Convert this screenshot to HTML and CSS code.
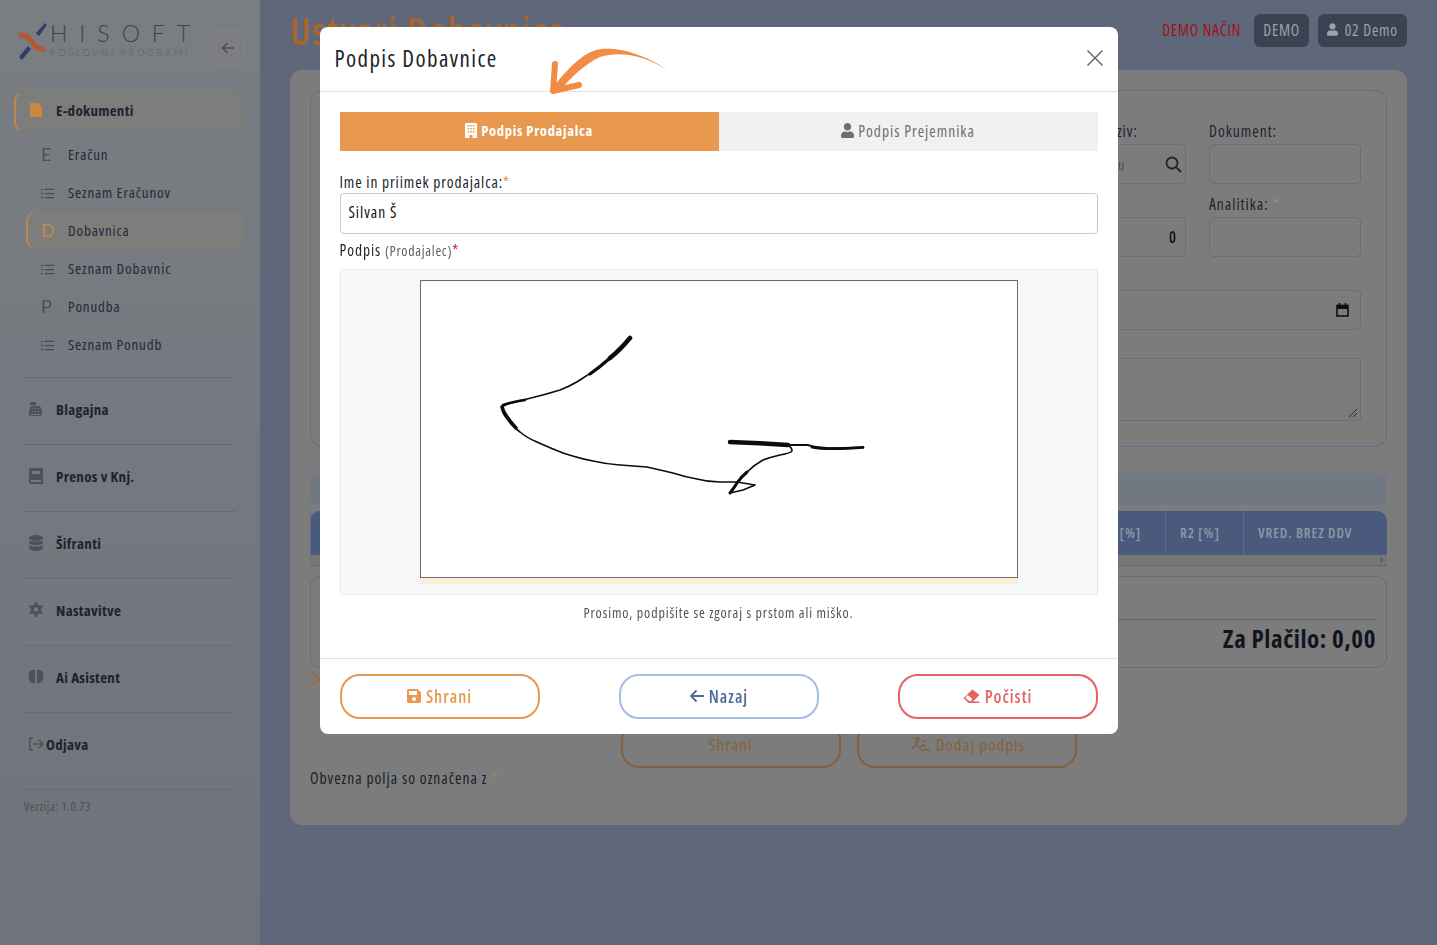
FILE: index.html
```html
<!DOCTYPE html>
<html lang="sl">
  <head>
    <meta charset="UTF-8" />
    <meta name="viewport" content="width=device-width, initial-scale=1.0" />
    <title>Ustvari Dobavnico</title>
    <link rel="stylesheet" href="styles.css">
  </head>
  <body>
    <svg class="sprite" width="0" height="0">
      <symbol id="i-user" viewBox="0 0 448 512"><path d="M224 256c70.7 0 128-57.3 128-128S294.7 0 224 0 96 57.3 96 128s57.3 128 128 128zm89.6 32h-16.7c-22.2 10.2-46.9 16-72.9 16s-50.6-5.8-72.9-16h-16.7C60.2 288 0 348.2 0 422.4V464c0 26.5 21.5 48 48 48h352c26.5 0 48-21.5 48-48v-41.6c0-74.2-60.2-134.4-134.4-134.4z"/></symbol>
      <symbol id="i-save" viewBox="0 0 448 512"><path d="M433.941 129.941l-83.882-83.882A48 48 0 0 0 316.118 32H48C21.49 32 0 53.49 0 80v352c0 26.51 21.49 48 48 48h352c26.51 0 48-21.49 48-48V163.882a48 48 0 0 0-14.059-33.941zM224 416c-35.346 0-64-28.654-64-64 0-35.346 28.654-64 64-64s64 28.654 64 64c0 35.346-28.654 64-64 64zm96-304.52V212c0 6.627-5.373 12-12 12H76c-6.627 0-12-5.373-12-12V108c0-6.627 5.373-12 12-12h228.52c3.183 0 6.235 1.264 8.485 3.515l3.48 3.48A11.996 11.996 0 0 1 320 111.48z"/></symbol>
      <symbol id="i-list" viewBox="0 0 16 16"><path d="M5 3h10v1.3H5zM5 7.4h10v1.3H5zM5 11.8h10v1.3H5zM1 2.8h2v1.7H1zM1 7.2h2v1.7H1zM1 11.6h2v1.7H1z"/></symbol>
    </svg>

    <div class="stran">
      <aside class="stranski">
        <div class="logo-vrsta">
          <div class="logo">
            <svg width="30" height="40" viewBox="0 0 30 40">
              <path d="M18 11 L27 1 L29 3 L21 14 Z" fill="#2f3f6c"/>
              <path d="M1 35 L10 24 L13 27 L4 38 Z" fill="#2f3f6c"/>
              <path d="M1 14 C9 11 11 17 15 21 C18 25 22 28 27 27" fill="none" stroke="#b5582d" stroke-width="5"/>
            </svg>
            <div class="logo-tekst">
              <span class="logo-ime">HISOFT</span>
              <span class="logo-pod">POSLOVNI PROGRAMI</span>
            </div>
          </div>
          <button class="skrci">
            <svg width="14" height="14" viewBox="0 0 14 14" fill="none" stroke="#4a505c" stroke-width="1.6"><path d="M13 7H1.5M6.5 2 1.5 7l5 5"/></svg>
          </button>
        </div>

        <a class="glavni aktiven prvi">
          <svg class="ikona" width="14" height="16" viewBox="0 0 14 16"><path d="M1 1h8l4 4v10H1z" fill="#c8893f"/></svg>
          E-dokumenti
        </a>
        <a class="pod"><span class="crka">E</span>Eračun</a>
        <a class="pod"><svg class="seznam" width="15" height="15"><use href="#i-list"/></svg>Seznam Eračunov</a>
        <a class="pod aktiven"><span class="crka oranzna">D</span>Dobavnica</a>
        <a class="pod"><svg class="seznam" width="15" height="15"><use href="#i-list"/></svg>Seznam Dobavnic</a>
        <a class="pod"><span class="crka">P</span>Ponudba</a>
        <a class="pod"><svg class="seznam" width="15" height="15"><use href="#i-list"/></svg>Seznam Ponudb</a>
        <div class="skupina-konec"></div>

        <a class="glavni">
          <svg class="ikona" width="16" height="16" viewBox="0 0 16 16" fill="#4c515b"><path d="M2 1h6v3H6v1h6l2 5v5H1v-5l2-5h2V4H2zM4 7v1h1V7zm3 0v1h1V7zm3 0v1h1V7zM4 10v1h1v-1zm3 0v1h1v-1zm3 0v1h1v-1zM2 13v1h12v-1z" fill-rule="evenodd"/></svg>
          Blagajna
        </a>
        <a class="glavni">
          <svg class="ikona" width="14" height="16" viewBox="0 0 14 16" fill="#4c515b"><path d="M2 0h12v16H2a2 2 0 0 1-2-2V2a2 2 0 0 1 2-2zm1 3v3h8V3zm-1 9v2h10v-2z" fill-rule="evenodd"/></svg>
          Prenos v Knj.
        </a>
        <a class="glavni">
          <svg class="ikona" width="14" height="16" viewBox="0 0 14 16" fill="#4c515b"><ellipse cx="7" cy="3" rx="7" ry="3"/><path d="M0 5c1 2 13 2 14 0v3c-1 3-13 3-14 0zM0 10c1 2 13 2 14 0v3c-1 4-13 4-14 0z"/></svg>
          Šifranti
        </a>
        <a class="glavni">
          <svg class="ikona" width="15" height="15" viewBox="0 0 16 16"><circle cx="8" cy="8" r="4.2" fill="none" stroke="#4c515b" stroke-width="3.2"/><path d="M8 0v16M1 4l14 8M15 4 1 12" stroke="#4c515b" stroke-width="2.6"/><circle cx="8" cy="8" r="2.3" fill="#77797e"/></svg>
          Nastavitve
        </a>
        <a class="glavni">
          <svg class="ikona" width="15" height="15" viewBox="0 0 16 16" fill="#4c515b"><path d="M7 1v14C3 16 0 13 0 8s3-8 7-7zM9 1c4-1 7 2 7 7s-3 8-7 7z"/></svg>
          Ai Asistent
        </a>
        <a class="glavni odjava">
          <svg width="16" height="14" viewBox="0 0 16 14" fill="none" stroke="#4c515b" stroke-width="1.5"><path d="M5 1H2v12h3M5 7h10M11 3l4 4-4 4"/></svg>
          Odjava
        </a>
        <div class="verzija">Verzija: 1.0.73</div>
      </aside>

      <main class="vsebina">
        <header class="glava">
          <h1>Ustvari Dobavnico</h1>
          <div class="glava-desno">
            <span class="demo-nacin">DEMO NAČIN</span>
            <button class="temen">DEMO</button>
            <button class="temen"><svg width="11" height="13"><use href="#i-user"/></svg> 02 Demo</button>
          </div>
        </header>

        <section class="kartica">
          <fieldset class="okvir">
            <div class="polje"></div>
            <div class="polje">
              <label>Dobavitelj naziv:</label>
              <div class="vnos iskanje"><span>Išči po nazivu</span>
                <svg width="17" height="17" viewBox="0 0 17 17" fill="none" stroke="#1f2530" stroke-width="1.8"><circle cx="7" cy="7" r="5.5"/><path d="m11 11 5 5"/></svg>
              </div>
            </div>
            <div class="polje">
              <label>Dokument:</label>
              <div class="vnos"></div>
            </div>
            <div class="polje"></div>
            <div class="polje">
              <label>&nbsp;</label>
              <div class="vnos stevilka">0</div>
            </div>
            <div class="polje">
              <label>Analitika: <i>*</i></label>
              <div class="vnos"></div>
            </div>
            <div class="polje siroko datum">
              <label>&nbsp;</label>
              <div class="vnos">
                <svg width="13" height="14" viewBox="0 0 13 14" fill="none" stroke="#0d0f14" stroke-width="1.6"><rect x="1" y="2.5" width="11" height="10.5"/><path d="M1 4.5h11" stroke-width="3"/><path d="M3.5 0v2M9.5 0v2"/></svg>
              </div>
            </div>
            <div class="polje siroko">
              <label>&nbsp;</label>
              <div class="opomba">
                <svg width="10" height="10" viewBox="0 0 10 10" stroke="#2b2b2b"><path d="M9 1 1 9M9 5 5 9"/></svg>
              </div>
            </div>
          </fieldset>

          <div class="trak"></div>

          <div class="tabela">
            <div class="tabela-glava">
              <span class="stolpec siri">R1 [%]</span>
              <span class="stolpec r2">R2 [%]</span>
              <span class="stolpec vred">VRED. BREZ DDV</span>
            </div>
            <div class="drsnik"><i></i></div>
          </div>

          <div class="povzetek">
            <div class="za-placilo">Za Plačilo: 0,00</div>
          </div>

          <svg class="puscica-desno" width="10" height="15" viewBox="0 0 10 15" fill="none" stroke="#a8652f" stroke-width="1.6"><path d="m1 1 7 6.5L1 14"/></svg>

          <div class="gumbi-spodaj">
            <button>Shrani</button>
            <button>
              <svg width="23" height="14" viewBox="0 0 21 13" fill="none" stroke="currentColor" stroke-width="1.5"><path d="M1 12h1M4 11c3-3 5-7 6-9 1-2-3-2-3 1 0 3 3 7 4 7 1 0 2-3 3-3s1 2 2 2M13 4h3M12 12h8"/></svg>
              Dodaj podpis
            </button>
          </div>
          <p class="obvezna">Obvezna polja so označena z <i>*</i></p>
        </section>
      </main>
    </div>

    <div class="ozadje">
      <div class="modal">
        <div class="modal-glava">
          <h2>Podpis Dobavnice</h2>
          <svg class="lok" width="120" height="50" viewBox="550 48 120 50">
            <path d="M669 71C640 51 612 46 596 50 580 55 567 70 553 87L560 91C572 76 585 64 600 57 620 51 642 54 669 71Z" fill="#f28c45"/>
            <path d="M555 64 553 91 579 85" fill="none" stroke="#f28c45" stroke-width="6" stroke-linecap="round" stroke-linejoin="round"/>
          </svg>
          <button class="zapri">
            <svg width="18" height="18" viewBox="0 0 18 18" stroke="#5f5f5f" stroke-width="1.4"><path d="m1.5 1.5 15 15M16.500 1.500l-15 15"/></svg>
          </button>
        </div>

        <div class="modal-telo">
          <div class="zavihki">
            <button class="zavihek izbran">
              <svg width="12" height="15" viewBox="0 0 12 15" fill="currentColor"><path fill-rule="evenodd" d="M1 0h10a1 1 0 0 1 1 1v14H7.500v-3h-3v3H0V1a1 1 0 0 1 1-1zm1.500 2v1.600h1.600V2zm2.700 0v1.600h1.600V2zm2.700 0v1.600h1.600V2zM2.500 5v1.600h1.600V5zm2.700 0v1.600h1.600V5zm2.700 0v1.600h1.600V5zM2.500 8v1.600h1.600V8zm2.700 0v1.600h1.600V8zm2.700 0v1.600h1.600V8z"/></svg>
              Podpis Prodajalca
            </button>
            <button class="zavihek">
              <svg width="13" height="15"><use href="#i-user"/></svg>
              Podpis Prejemnika
            </button>
          </div>

          <label class="oznaka">Ime in priimek prodajalca:<i>*</i></label>
          <input class="ime" type="text" value="Silvan Š" />

          <label class="oznaka podpis-oznaka">Podpis <small>(Prodajalec)</small><b>*</b></label>
          <div class="podpis-polje">
            <div class="platno">
              <svg width="596" height="296" viewBox="1 1 596 296" fill="none" stroke="#0c0c0c" stroke-linecap="round" stroke-linejoin="round">
                <path stroke-width="1.600" d="M210 58Q193 77 183 84 173 92 163 98 153 105 140 110 127 114 115 117 103 120 93 122.500 83 125 82 128 82 133 88 140 92 146 100 152 107 158 117 162 130 168 143 173 158 178 173 181 186 184 200 185 213 186 227 187 240 190 253 193 265 197 277 199 288 202 300 202L317 202 335 205 323 210 310 213Q314 208 317 203 321 197 327 192 334 185 343 180 351 177 360 175 371 173 372 171 372 167 368 166 356 164 343 163L310 162"/>
                <path stroke-width="1.800" d="M368 165H387Q392 166 400 168.700L443 167.300"/>
                <path stroke-width="4.500" d="M210 58Q200 70 190 78"/>
                <path stroke-width="3.200" d="M190 78Q180 87 170 94"/>
                <path stroke-width="3.500" d="M82 127Q84 135 96 148"/>
                <path stroke-width="2.500" d="M83 125Q92 122 105 120"/>
                <path stroke-width="4.500" d="M310 162Q340 163 368 165"/>
                <path stroke-width="2.800" d="M392 167Q410 170 443 167.300"/>
                <path stroke-width="3" d="M310 213Q314 208 317 203 321 197 327 192"/>
              </svg>
            </div>
            <div class="platno-rob"></div>
          </div>
          <p class="navodilo">Prosimo, podpišite se zgoraj s prstom ali miško.</p>
        </div>

        <div class="modal-noga">
          <button class="gumb oranzen"><svg width="14" height="16"><use href="#i-save"/></svg> Shrani</button>
          <button class="gumb moder">
            <svg width="15" height="14" viewBox="0 0 15 14" fill="none" stroke="currentColor" stroke-width="1.800"><path d="M15 7H2M7.500 1.500 2 7l5.500 5.500"/></svg>
            Nazaj
          </button>
          <button class="gumb rdec">
            <svg width="17" height="14" viewBox="0 0 17 14" fill="currentColor"><path d="M9.500.500 16.500 6 10 12.500H16.500V14H5.500L.500 9zM7 12.500 9.500 10 4.500 6 2.500 9z" fill-rule="evenodd"/></svg>
            Počisti
          </button>
        </div>
      </div>
    </div>
  </body>
</html>
```

FILE: styles.css
```css
* {
  box-sizing: border-box;
}
body {
  margin: 0;
  height: 945px;
  overflow: hidden;
  font-family: "Open Sans", "Noto Sans", sans-serif;
  font-stretch: 75%;
  font-size: 15.500px;
  font-weight: 500;
  letter-spacing: 1px;
  color: #1c2330;
  background-color: #5f687b;
}
button {
  font: inherit;
  font-stretch: inherit;
  letter-spacing: inherit;
  cursor: pointer;
}
.sprite {
  display: none;
}
.stran {
  display: flex;
  height: 945px;
}

/* stranski meni */
.stranski {
  width: 260px;
  flex-shrink: 0;
  padding: 0 15px 0 14px;
  background: linear-gradient(#7a7d82, #70737a);
}
.logo-vrsta {
  display: flex;
  justify-content: space-between;
  align-items: flex-start;
  height: 91px;
}
.logo {
  display: flex;
  gap: 2px;
  margin: 22px 0 0 4px;
}
.logo-tekst {
  display: flex;
  flex-direction: column;
  margin-top: -1px;
}
.logo-ime {
  font-family: Lato, sans-serif;
  font-stretch: normal;
  font-weight: 300;
  font-size: 23px;
  line-height: 24px;
  letter-spacing: 12px;
  color: #3d4450;
}
.logo-pod {
  margin-top: 1px;
  font-family: Lato, sans-serif;
  font-stretch: normal;
  font-weight: 300;
  font-size: 9.500px;
  line-height: 14px;
  letter-spacing: 2.500px;
  color: #5a5f68;
}
.skrci {
  width: 35px;
  height: 35px;
  margin-top: 30px;
  display: flex;
  align-items: center;
  justify-content: center;
  padding: 0;
  background: #7c7e80;
  border: 1px solid #808285;
  border-radius: 6px;
}
.glavni {
  display: flex;
  align-items: center;
  height: 67px;
  margin: 0 9px 0 10px;
  padding: 0 0 5px 4px;
  font-size: 15px;
  font-weight: 700;
  letter-spacing: 0.300px;
  border-bottom: 1px solid #686b72;
}
.glavni .ikona {
  width: 28px;
  flex-shrink: 0;
  padding-right: 12px;
}
.glavni.prvi {
  height: 41px;
  margin: 0 0 3px;
  padding: 0 0 3px 12px;
  width: 231px;
  background: #7d7d7b;
  border: 1px solid #7a7a78;
  border-left: 2px solid #b98a50;
  border-radius: 10px;
}
.pod {
  display: flex;
  align-items: center;
  height: 38px;
  margin-left: 12px;
  padding: 0 0 0 12px;
  width: 219px;
  font-size: 15px;
  letter-spacing: 0.850px;
  color: #232a38;
}
.pod.aktiven {
  background: #7d7d7b;
  border-left: 2px solid #b98a50;
  border-radius: 10px;
  padding-left: 10px;
}
.crka {
  width: 30px;
  font-family: Lato, sans-serif;
  font-stretch: normal;
  font-size: 18px;
  font-weight: 400;
  color: #4c515b;
  padding-left: 3px;
}
.crka.oranzna {
  color: #c18a4f;
}
.seznam {
  margin: 2px 13px 0 2px;
  fill: #474c57;
}
.skupina-konec {
  height: 15px;
  margin: 0 13px 0 10px;
  border-bottom: 1px solid #686b72;
}
.odjava {
  gap: 2px;
  height: 77px;
  padding-bottom: 15px;
}
.verzija {
  margin: 8px 0 0 10px;
  font-size: 12px;
  font-weight: 400;
  letter-spacing: 0.600px;
  color: #4a4e57;
}

/* glavni del */
.vsebina {
  flex: 1;
  padding: 0 30px 0 30px;
}
.glava {
  display: flex;
  justify-content: space-between;
  align-items: center;
  height: 70px;
  padding-bottom: 10px;
}
h1 {
  margin: 0;
  font-size: 38px;
  font-weight: 600;
  letter-spacing: 1.500px;
  color: #a8652f;
}
.glava-desno {
  display: flex;
  align-items: center;
  gap: 9px;
  letter-spacing: 0.800px;
}
.demo-nacin {
  color: #a3101c;
  margin-right: 4px;
}
.temen {
  height: 33px;
  padding: 0 9px;
  color: #9ca1ab;
  background: #3a4351;
  border: 0;
  border-radius: 6px;
  fill: #9ca1ab;
}
.temen svg {
  margin-right: 3px;
}
.kartica {
  height: 755px;
  padding: 20px;
  background: #7c7c7c;
  border-radius: 12px;
}
.okvir {
  display: grid;
  grid-template-columns: 1fr 152px 152px;
  grid-template-rows: 73px 73px 68px auto;
  column-gap: 23px;
  align-content: start;
  height: 357px;
  margin: 0;
  padding: 32px 25px 0;
  border: 1px solid #66688c;
  border-radius: 12px;
}
.polje label {
  display: block;
  height: 21px;
  line-height: 16px;
  white-space: nowrap;
}
.polje i,
.obvezna i {
  font-style: normal;
  color: #a98a62;
}
.siroko {
  grid-column: 1 / -1;
}
.vnos {
  display: flex;
  align-items: center;
  height: 40px;
  padding: 0 10px;
  border: 1px solid #6d6d6f;
  border-radius: 5px;
}
.iskanje {
  justify-content: space-between;
  padding-right: 3px;
  font-size: 14px;
  letter-spacing: 1.200px;
  color: #4c4c4c;
  white-space: nowrap;
}
.stevilka {
  justify-content: flex-end;
  padding-right: 8px;
  font-weight: 600;
  color: #111;
}
.datum .vnos {
  justify-content: flex-end;
  padding-right: 11px;
}
.opomba {
  display: flex;
  align-items: flex-end;
  justify-content: flex-end;
  height: 63px;
  padding: 2px;
  border: 1px solid #6d6d6f;
  border-radius: 2px;
}
.trak {
  height: 32px;
  margin-top: 26px;
  background: #727882;
  border-radius: 8px;
}
.tabela {
  margin-top: 6px;
}
.tabela-glava {
  display: flex;
  height: 44px;
  background: #4a5a7c;
  border-radius: 10px 10px 0 0;
  color: #8d99a8;
  font-size: 14px;
  font-weight: 600;
  letter-spacing: 0.900px;
  line-height: 44px;
}
.stolpec {
  padding: 0 14px;
  border-left: 1px solid #5d6c89;
  white-space: nowrap;
}
.siri {
  flex: 1;
  text-align: right;
  padding-right: 24px;
}
.r2 {
  width: 78px;
}
.vred {
  width: 144px;
}
.drsnik {
  display: flex;
  justify-content: flex-end;
  align-items: center;
  height: 11px;
  padding-right: 3px;
  background: #767676;
  border-bottom: 1px solid #676767;
}
.drsnik i {
  border-left: 4px solid #636363;
  border-top: 3px solid transparent;
  border-bottom: 3px solid transparent;
}
.povzetek {
  display: flex;
  align-items: flex-end;
  justify-content: flex-end;
  height: 92px;
  margin-top: 10px;
  padding: 0 10px 12px;
  border: 1px solid #6b6b6b;
  border-radius: 10px;
}
.za-placilo {
  width: 400px;
  padding-top: 1px;
  border-top: 1px solid #626262;
  font-size: 25px;
  font-weight: 700;
  letter-spacing: 0.600px;
  text-align: right;
  color: #10151f;
}
.puscica-desno {
  display: block;
  margin: 4px 0 0 1px;
}
.gumbi-spodaj {
  display: flex;
  justify-content: center;
  gap: 16px;
  margin-top: 35px;
}
.gumbi-spodaj button {
  display: flex;
  align-items: center;
  justify-content: center;
  gap: 5px;
  width: 220px;
  height: 46px;
  padding: 0 0 2px;
  font-size: 17px;
  color: #85603c;
  background: none;
  border: 2px solid #85603c;
  border-radius: 18px;
}
.obvezna {
  margin: 1px 0 0;
  line-height: 18px;
  color: #191d26;
}

/* okno za podpis */
.ozadje {
  position: fixed;
  inset: 0;
  display: flex;
  justify-content: center;
  padding-top: 27px;
}
.modal {
  position: relative;
  display: flex;
  flex-direction: column;
  width: 798px;
  height: 707px;
  background: #fff;
  border-radius: 8px;
}
.modal-glava {
  display: flex;
  justify-content: space-between;
  align-items: center;
  height: 65px;
  padding: 0 14px 2px 15px;
  border-bottom: 1px solid #e2e2e2;
}
.modal-glava h2 {
  margin: 0;
  font-size: 23px;
  font-weight: 500;
  letter-spacing: 1.400px;
  color: #212529;
}
.lok {
  position: absolute;
  left: 230px;
  top: 21px;
}
.zapri {
  padding: 0;
  display: flex;
  background: none;
  border: 0;
}
.modal-telo {
  flex: 1;
  padding: 20px;
}
.zavihki {
  display: flex;
  height: 39px;
}
.zavihek {
  flex: 1;
  display: flex;
  align-items: center;
  justify-content: center;
  gap: 4px;
  padding: 0 0 2px;
  border: 0;
  color: #6c6f74;
  fill: #6c6f74;
  background: #f1f1f1;
}
.zavihek.izbran {
  font-size: 14.500px;
  font-weight: 700;
  letter-spacing: 0.700px;
  color: #fff;
  background: #e8994f;
}
.oznaka {
  display: block;
  margin-top: 22px;
  height: 20px;
  line-height: 18px;
  letter-spacing: 0.900px;
  color: #212529;
}
.oznaka i {
  font-style: normal;
  color: #e8994f;
}
.oznaka small {
  font-size: 14px;
  letter-spacing: 0.700px;
  color: #5b5f64;
}
.oznaka b {
  color: #d9224c;
  font-weight: 500;
}
.ime {
  display: block;
  width: 100%;
  height: 41px;
  padding: 0 8px 4px;
  font: inherit;
  font-stretch: inherit;
  letter-spacing: inherit;
  color: #111;
  border: 1px solid #c9c9c9;
  border-radius: 4px;
}
.podpis-oznaka {
  margin-top: 7px;
  height: 28px;
}
.podpis-polje {
  height: 326px;
  padding-top: 10px;
  background: #f7f8fa;
  border: 1px solid #e8e8e8;
  border-radius: 3px;
}
.platno {
  width: 598px;
  height: 298px;
  margin: 0 auto;
  background: #fff;
  border: 1px solid #6c6c6c;
}
.platno svg {
  display: block;
  filter: blur(0.350px);
}
.platno-rob {
  width: 598px;
  height: 6px;
  margin: 0 auto;
  background: #fbeed9;
}
.navodilo {
  margin: 9px 0 0;
  font-size: 14px;
  letter-spacing: 0.880px;
  line-height: 18px;
  text-align: center;
  color: #4f5358;
}
.modal-noga {
  display: flex;
  justify-content: space-between;
  height: 76px;
  padding: 15px 20px 0;
  border-top: 1px solid #e2e2e2;
}
.gumb {
  display: flex;
  align-items: center;
  justify-content: center;
  gap: 5px;
  width: 200px;
  height: 45px;
  padding: 0 0 1px;
  font-size: 17px;
  font-weight: 600;
  background: #fff;
  border-width: 2px;
  border-style: solid;
  border-radius: 20px;
}
.oranzen {
  color: #e8994f;
  fill: #e8994f;
  border-color: #e8994f;
}
.moder {
  color: #4f6a96;
  border-color: #a5bde6;
}
.rdec {
  color: #e46464;
  border-color: #e46464;
}
```
